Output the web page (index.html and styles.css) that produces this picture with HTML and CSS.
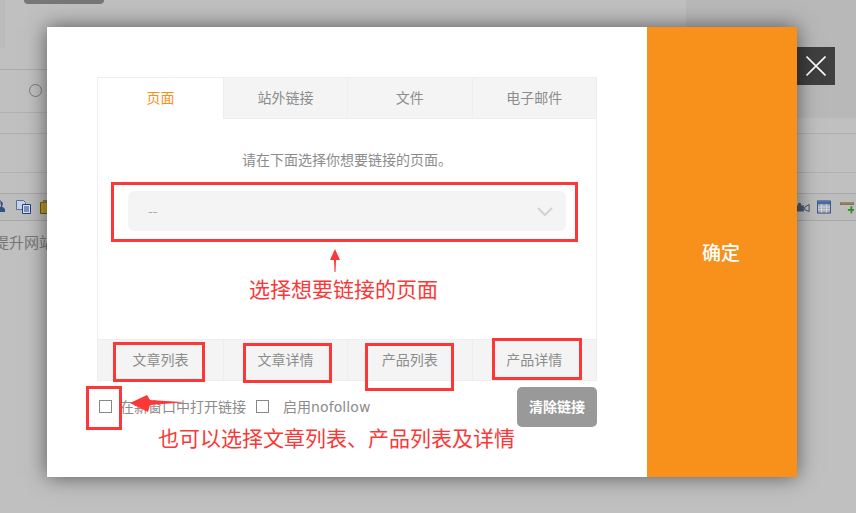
FILE: index.html
```html
<!DOCTYPE html>
<html lang="zh">
<head>
<meta charset="utf-8">
<title>链接</title>
<link rel="stylesheet" href="styles.css">
</head>
<body>
<div class="page">
  <div class="bg-top">
    <div class="bg-stub"></div>
    <div class="bg-btn"></div>
    <div class="bg-side"></div>
  </div>
  <div class="bg-row bg-radio-row"><span class="bg-radio"></span></div>
  <div class="bg-row bg-r2"></div>
  <div class="bg-row bg-r3"></div>
  <div class="bg-toolbar">
    <svg class="tool tool-a" viewBox="0 0 14 14"><path d="M5 0l3 3-1 4 1 0 2 2v3H5l-1-3 2-3z" fill="#33527f"/></svg>
    <svg class="tool tool-b" viewBox="0 0 16 14"><path d="M.5.5h7l2 2v7H.5z" fill="#c9d3e6" stroke="#5b6f9b"/><path d="M6.500 4.500h8v9h-8z" fill="#dbe3f1" stroke="#1f3f86"/><path d="M8 7h5M8 9h5M8 11h5" stroke="#1f3f86"/></svg>
    <svg class="tool tool-c" viewBox="0 0 14 14"><path d="M.5 2.500h10v11H.5z" fill="#b89a2e" stroke="#6f5a12"/><path d="M3 0h5v3H3z" fill="#8c7a3a"/></svg>
    <svg class="tool tool-d" viewBox="0 0 16 14"><path d="M1 4h8v7H1z" fill="#4b5a6a"/><circle cx="4" cy="3" r="2" fill="#4b5a6a"/><path d="M10 6l5-3v8l-5-2z" fill="none" stroke="#33475a"/></svg>
    <svg class="tool tool-e" viewBox="0 0 15 14"><path d="M.5.5h14v13H.5z" fill="#a9aeb6" stroke="#2e4a80"/><path d="M1 1h13v3H1z" fill="#4468b3"/><path d="M5 4v9M10 4v9M1 7h13M1 10h13" stroke="#d5d8de"/></svg>
    <svg class="tool tool-f" viewBox="0 0 16 14"><path d="M0 1h16v2H0z" fill="#a68a5a" stroke="#4d3c1f" stroke-width=".5"/><path d="M9 8h3V5h2v3h2v2h-2v3h-2v-3H9z" fill="#2f8a2c"/></svg>
  </div>
  <div class="bg-text">提升网站</div>

  <div class="close">
    <svg viewBox="0 0 20 20" class="close-x"><path d="M.5.5l19 19M19.5.5l-19 19" stroke="#fff" stroke-width="1.6" fill="none"/></svg>
  </div>

  <div class="modal">
    <div class="modal-main">
      <div class="panel">
        <div class="tabs">
          <div class="tab tab-on">页面</div>
          <div class="tab">站外链接</div>
          <div class="tab">文件</div>
          <div class="tab">电子邮件</div>
        </div>
        <div class="panel-body">
          <p class="hint">请在下面选择你想要链接的页面。</p>
          <div class="select">
            <span>--</span>
            <svg class="chev" viewBox="0 0 16 10"><path d="M1 1l7 7 7-7" fill="none" stroke="#d2d2d2" stroke-width="2"/></svg>
          </div>
        </div>
        <div class="tabs tabs-bottom">
          <div class="tab">文章列表</div>
          <div class="tab">文章详情</div>
          <div class="tab">产品列表</div>
          <div class="tab">产品详情</div>
        </div>
      </div>
      <div class="options">
        <span class="check"></span><span class="opt-label">在新窗口中打开链接</span>
        <span class="check check-2"></span><span class="opt-label">启用<span class="latin">nofollow</span></span>
        <button class="clear">清除链接</button>
      </div>
    </div>
    <div class="confirm">确定</div>
  </div>

  <div class="mark mark-select"></div>
  <div class="mark mark-a"></div>
  <div class="mark mark-b"></div>
  <div class="mark mark-c"></div>
  <div class="mark mark-d"></div>
  <div class="mark mark-e"></div>
  <svg class="arrow-up" viewBox="0 0 12 24"><path d="M6 0l5 11H7l-.5 12h-1L5 11H1z" fill="#fb3737"/></svg>
  <svg class="arrow-left" viewBox="0 0 54 17"><path d="M0 8L17 0l3 5 32 2v.5L20 10l-2 7z" fill="#fb3737"/></svg>
  <div class="note note-1">选择想要链接的页面</div>
  <div class="note note-2">也可以选择文章列表、产品列表及详情</div>
</div>
</body>
</html>
```

FILE: styles.css
```css
* { box-sizing: border-box; }
html, body { margin: 0; padding: 0; }
body { font-family: "Noto Sans CJK SC", "Liberation Sans", sans-serif; }

.page {
  position: relative;
  width: 856px;
  height: 513px;
  overflow: hidden;
  background: #c0c0c0;
}

/* dimmed page behind the dialog */
.bg-top { position: relative; height: 70px; border-bottom: 1px solid #ababab; }
.bg-stub { position: absolute; left: 0; top: 0; width: 5px; height: 48px; background: #bbb; }
.bg-btn { position: absolute; left: 24px; top: 0; width: 80px; height: 4px; background: #777; border-radius: 0 0 5px 5px; }
.bg-side { position: absolute; left: 686px; top: 0; width: 170px; height: 118px; background: #b8b8b8; }
.bg-row { border-bottom: 1px solid #b0b0b0; }
.bg-radio-row { height: 43px; padding: 14px 0 0 29px; }
.bg-radio { display: block; width: 13px; height: 13px; border: 1px solid #7a7a7a; border-radius: 50%; }
.bg-r2 { height: 21px; }
.bg-r3 { height: 39px; }
.bg-toolbar { position: relative; height: 28px; margin-top: 20px; background: #bdbdbd; border-top: 1px solid #a8a8a8; border-bottom: 1px solid #a8a8a8; }
.tool { position: absolute; top: 6px; width: 14px; height: 14px; }
.tool-a { left: -5px; }
.tool-b { left: 16px; width: 16px; }
.tool-c { left: 40px; }
.tool-d { left: 796px; top: 7px; }
.tool-e { left: 817px; }
.tool-f { left: 840px; top: 7px; }
.bg-text { margin: 9px 0 0 -6px; font-size: 15px; line-height: 24px; color: #777; white-space: nowrap; }

.close {
  position: absolute;
  left: 797px;
  top: 47px;
  width: 38px;
  height: 38px;
  background: #3f3f3f;
  display: flex;
  align-items: center;
  justify-content: center;
}
.close-x { width: 20px; height: 20px; }

.modal {
  position: absolute;
  left: 47px;
  top: 27px;
  width: 750px;
  height: 450px;
  display: flex;
  background: #fff;
  box-shadow: 0 0 20px rgba(0, 0, 0, .55);
}
.modal-main { width: 600px; padding: 50px 50px 0; }
.confirm {
  width: 150px;
  padding: 0 2px 2px 0;
  display: flex;
  align-items: center;
  justify-content: center;
  background: #f8901c;
  color: #fff;
  font-size: 19px;
  font-weight: 500;
}

.panel {
  height: 304px;
  display: flex;
  flex-direction: column;
  border: 1px solid #eee;
}
.tabs { display: flex; height: 41px; background: #f4f4f4; border-bottom: 1px solid #eee; }
.tabs-bottom { border-bottom: 0; border-top: 1px solid #eee; }
.tab {
  flex: 1 1 0;
  display: flex;
  align-items: center;
  justify-content: center;
  padding-bottom: 3px;
  border-left: 1px solid #eee;
  font-size: 14px;
  color: #8c8c8c;
}
.tab:first-child { flex: 0 0 126px; border-left: 0; border-right: 1px solid #eee; }
.tab:nth-child(2) { flex: 0 0 123px; border-left: 0; }
.tab-on { background: #fff; color: #f8901c; margin-bottom: -1px; }
.panel-body { flex: 1; padding: 28px 30px 0; }
.hint { margin: 0 0 20px; font-size: 14px; line-height: 24px; color: #8c8c8c; text-align: center; }
.select {
  height: 40px;
  display: flex;
  align-items: center;
  justify-content: space-between;
  padding: 0 13px 2px 20px;
  background: #f4f4f4;
  border-radius: 6px;
  font-size: 14px;
  color: #aaa;
}
.chev { width: 16px; height: 10px; margin-top: 3px; }

.options { display: flex; align-items: center; height: 40px; margin-top: 6px; font-size: 14px; color: #8c8c8c; }
.check { width: 13px; height: 13px; margin: -2px 8px 0 2px; border: 1px solid #888; flex: none; }
.check-2 { margin: -2px 14px 0 10px; }
.opt-label { white-space: nowrap; padding-bottom: 3px; }
.latin { font-family: "DejaVu Sans", sans-serif; letter-spacing: .1px; }
.clear {
  margin-left: auto;
  width: 80px;
  height: 40px;
  padding: 0 0 2px;
  border: 0;
  border-radius: 5px;
  background: #999;
  color: #fff;
  font: 700 14px "Noto Sans CJK SC", sans-serif;
}

/* red annotations drawn over the screenshot */
.mark { position: absolute; border: 3px solid #fb3737; }
.mark-select { left: 111px; top: 182px; width: 467px; height: 60px; }
.mark-a { left: 113px; top: 342px; width: 92px; height: 40px; }
.mark-b { left: 243px; top: 343px; width: 89px; height: 40px; }
.mark-c { left: 365px; top: 343px; width: 89px; height: 48px; }
.mark-d { left: 492px; top: 338px; width: 90px; height: 42px; }
.mark-e { left: 86px; top: 386px; width: 36px; height: 44px; }
.arrow-up { position: absolute; left: 329px; top: 249px; width: 12px; height: 24px; }
.arrow-left { position: absolute; left: 130px; top: 395px; width: 54px; height: 17px; }
.note { position: absolute; font-size: 21px; line-height: 28px; color: #fb3737; white-space: nowrap; }
.note-1 { left: 249px; top: 274px; }
.note-2 { left: 158px; top: 423px; }
```
